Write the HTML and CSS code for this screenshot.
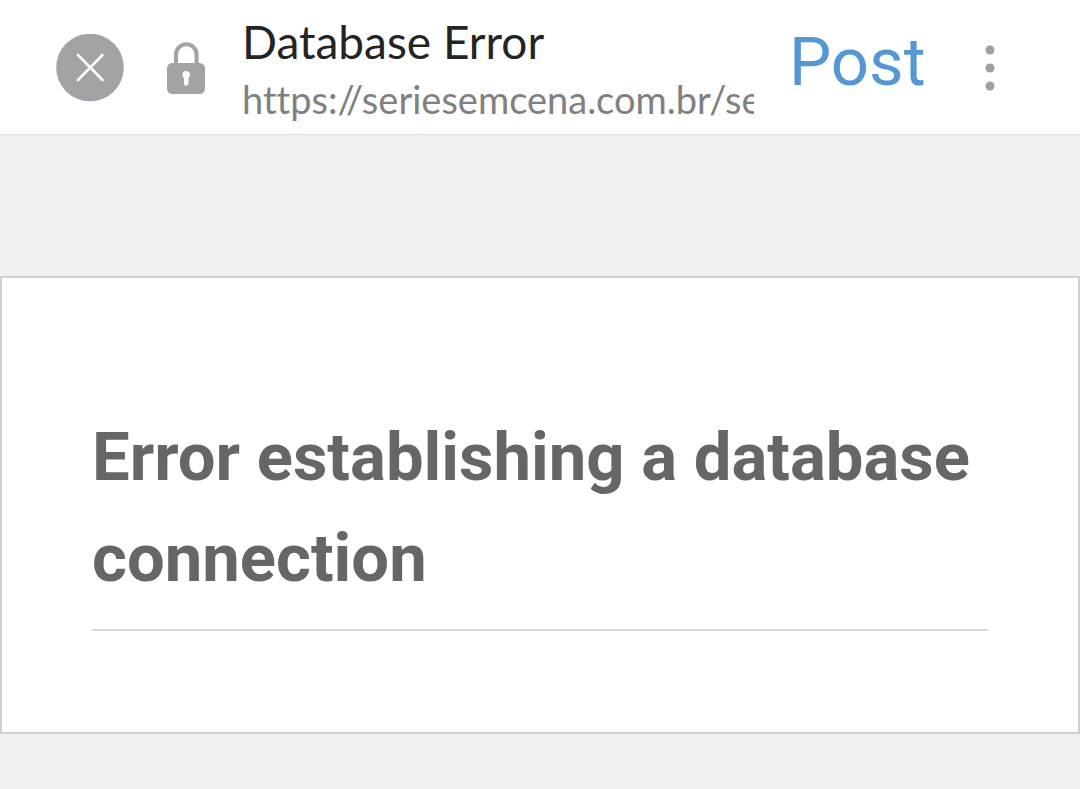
FILE: index.html
```html
<!DOCTYPE html>
<html lang="en">
<head>
  <meta charset="UTF-8" />
  <meta name="viewport" content="width=device-width, initial-scale=1" />
  <title>Database Error</title>
  <link rel="stylesheet" href="styles.css">
</head>
<body>
  <!-- TOP BAR -->
  <header class="topbar">
    <button class="close-btn" type="button" aria-label="Close">
      <svg viewBox="0 0 68 68" width="68" height="68">
        <circle cx="34" cy="33.500" r="33.800" fill="#a3a2a7" />
        <path d="M22 21 L46.500 46 M46.500 21 L22 46" stroke="#fff" stroke-width="2.600" stroke-linecap="round" />
      </svg>
    </button>

    <svg class="lock" viewBox="0 0 38 52" width="38" height="52" aria-hidden="true">
      <path d="M9 23 V12.500 a10.300 10.300 0 0 1 20.600 0 V23" fill="none" stroke="#a3a2a7" stroke-width="4" />
      <rect x="0" y="21" width="38" height="31" rx="5.500" fill="#a3a2a7" />
      <circle cx="19.200" cy="32.800" r="3.700" fill="#fff" />
      <path d="M19.200 34 V41.500" stroke="#fff" stroke-width="4.600" stroke-linecap="round" />
    </svg>

    <div class="page-info">
      <div class="page-title">Database Error</div>
      <div class="page-url">https://seriesemcena.com.br/se</div>
    </div>

    <button class="post-btn" type="button">Post</button>

    <button class="menu-btn" type="button" aria-label="Menu">
      <svg viewBox="0 0 10 46" width="10" height="46">
        <g fill="#a0a0a0">
          <circle cx="5" cy="5" r="4.500" />
          <circle cx="5" cy="23" r="4.500" />
          <circle cx="5" cy="41" r="4.500" />
        </g>
      </svg>
    </button>
  </header>

  <!-- ERROR PAGE -->
  <main class="error-card">
    <h1>Error establishing a database connection</h1>
  </main>
</body>
</html>
```
FILE: styles.css
```css
* {
  box-sizing: border-box;
}

body {
  margin: 0;
  background: #f0f0f0;
  font-family: Roboto, sans-serif;
}

button {
  padding: 0;
  border: 0;
  background: none;
  font: inherit;
  cursor: pointer;
}

.topbar {
  display: flex;
  align-items: center;
  height: 135px;
  padding: 2px 85px 0 56px;
  background: #fff;
  border-bottom: 1px solid #e4e4e4;
}

.close-btn,
.lock,
.menu-btn {
  flex: none;
}

.close-btn svg,
.menu-btn svg {
  display: block;
}

.lock {
  margin-left: 43px;
}

.page-info {
  flex: 1;
  min-width: 0;
  margin: 0 35px 0 37px;
  padding-top: 4px;
  font-family: Lato, sans-serif;
  font-variant-ligatures: none;
  white-space: nowrap;
}

.page-title {
  overflow: hidden;
  color: #242424;
  font-size: 46px;
  line-height: 58px;
}

.page-url {
  overflow: hidden;
  color: #808080;
  font-size: 38px;
  line-height: 56px;
}

.post-btn {
  width: 136px;
  overflow: hidden;
  color: #5596d5;
  font-size: 67px;
  line-height: 80px;
  text-align: left;
  padding-bottom: 12px;
}

.menu-btn {
  margin-left: 60px;
}

.error-card {
  margin-top: 141px;
  padding: 129px 90px 101px;
  background: #fff;
  border: 2px solid #ccd0d4;
  box-shadow: 0 2px 3px rgba(0, 0, 0, 0.04);
}

.error-card h1 {
  margin: 0;
  padding-bottom: 20px;
  border-bottom: 2px solid #dadada;
  color: #666;
  font-size: 67px;
  font-weight: bold;
  line-height: 101px;
}
```
